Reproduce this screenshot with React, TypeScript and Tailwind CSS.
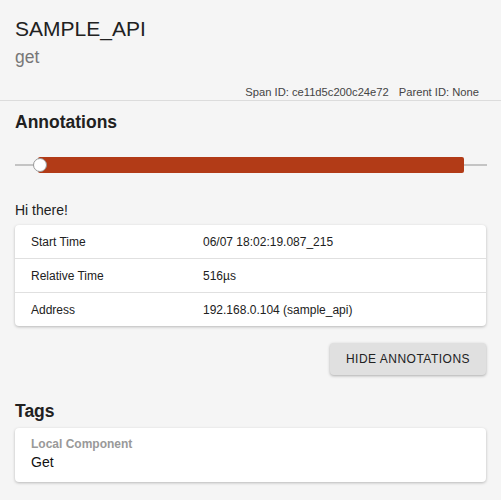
export default function App() {
  const rows = [
    { label: "Start Time", value: "06/07 18:02:19.087_215" },
    { label: "Relative Time", value: "516µs" },
    { label: "Address", value: "192.168.0.104 (sample_api)" },
  ];

  return (
    <div className="h-[500px] w-[501px] overflow-hidden bg-[#f5f5f5] font-['Liberation_Sans',Arial,sans-serif] text-[#212121]">
      <div className="border-b border-[#dcdcdc] px-[15px] pt-[16px] pb-[1px]">
        <div className="text-[21px] leading-[26px]">SAMPLE_API</div>
        <div className="mt-[4px] text-[17.5px] leading-[22px] text-[#777]">get</div>
        <div className="mt-[17px] flex justify-end gap-[10px] pr-[7px] text-[11.2px] leading-[14px] text-[#444]">
          <span>Span ID: ce11d5c200c24e72</span>
          <span>Parent ID: None</span>
        </div>
      </div>

      <div className="px-[15px]">
        <h2 className="mt-[10px] text-[17.5px] font-bold leading-[22px]">Annotations</h2>

        <div className="relative mt-[23px] h-[18px]">
          <div className="absolute left-0 right-[-1px] top-[8px] h-[2px] bg-[#c4c4c4]" />
          <div className="absolute left-[23px] right-[22px] top-[1px] h-[16px] rounded-[2px] bg-[#b23b17]" />
          <div className="absolute left-[18px] top-[2px] h-[14px] w-[14px] rounded-full border border-[#999] bg-white" />
        </div>

        <div className="mt-[27px] text-[14px] leading-[18px]">Hi there!</div>

        <div className="mt-[6px] rounded-[4px] bg-white shadow-[0_1px_3px_rgba(0,0,0,0.25)]">
          {rows.map((r, i) => (
            <div
              key={r.label}
              className={`flex h-[33px] items-center text-[12px] ${i > 0 ? "border-t border-[#e0e0e0] h-[34px]" : ""}`}
            >
              <div className="w-[188px] pl-[16px]">{r.label}</div>
              <div>{r.value}</div>
            </div>
          ))}
        </div>

        <div className="mt-[17px] flex justify-end">
          <button className="h-[32px] w-[156px] rounded-[4px] bg-[#e0e0e0] text-[12px] tracking-[0.5px] text-[#222] shadow-[0_1px_3px_rgba(0,0,0,0.3)]">
            HIDE ANNOTATIONS
          </button>
        </div>

        <h2 className="mt-[25px] text-[17.5px] font-bold leading-[22px]">Tags</h2>

        <div className="mt-[6px] rounded-[4px] bg-white px-[16px] pt-[9px] pb-[9px] shadow-[0_1px_3px_rgba(0,0,0,0.25)]">
          <div className="text-[12px] font-bold leading-[15px] text-[#999]">Local Component</div>
          <div className="text-[14px] leading-[21px] text-[#111]">Get</div>
        </div>
      </div>
    </div>
  );
}
